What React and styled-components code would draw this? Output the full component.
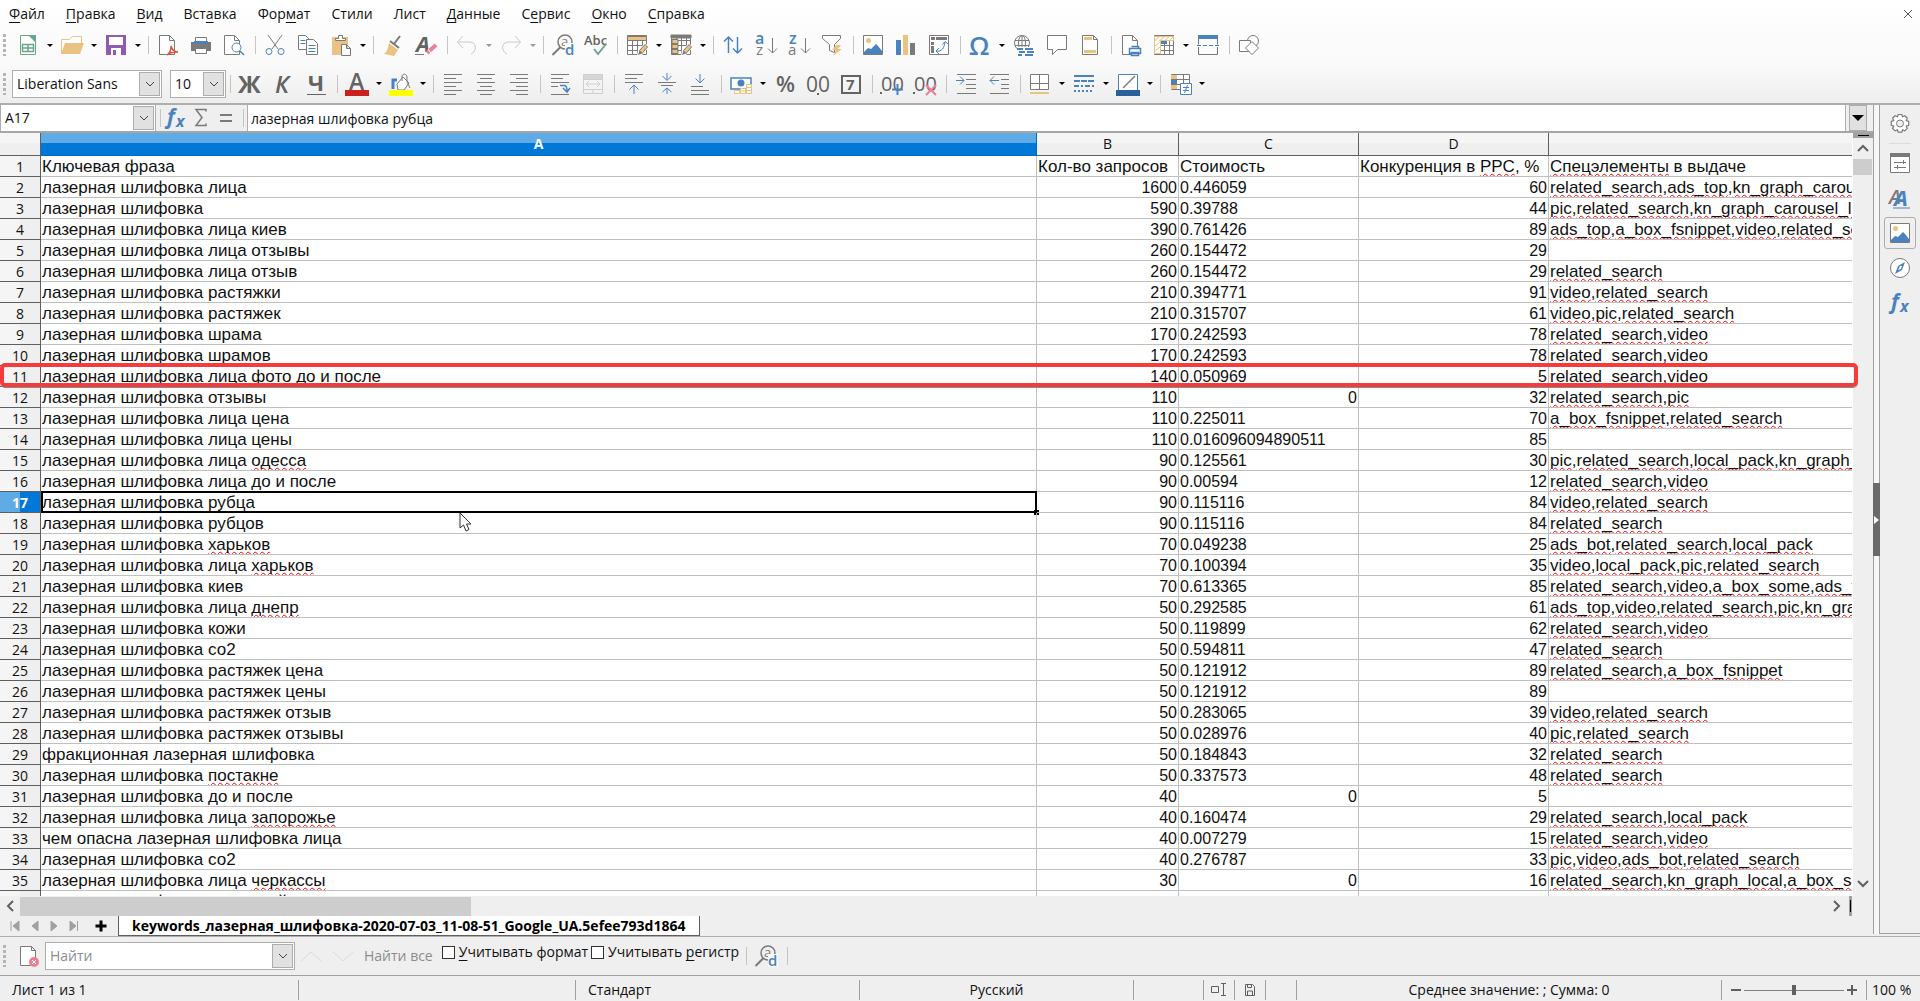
import React from 'react';
import styled, { createGlobalStyle, css } from 'styled-components';

const GRAY = '#7a7a7a';
const BLUE = '#4a82bd';
const TAN = '#eac282';
const UI_FONT = '"Open Sans", "Noto Sans", sans-serif';
const CELL_FONT = '"Liberation Sans", Arial, sans-serif';

const menu = [
  ['', 'Ф', 'айл'],
  ['', 'П', 'равка'],
  ['', 'В', 'ид'],
  ['Вст', 'а', 'вка'],
  ['Фор', 'м', 'ат'],
  ['Стили', '', ''],
  ['Лист', '', ''],
  ['', 'Д', 'анные'],
  ['С', 'е', 'рвис'],
  ['', 'О', 'кно'],
  ['', 'С', 'правка'],
];

// misspelled words are wrapped in tildes
const rows = [
  ['Ключевая фраза', 'Кол-во запросов', 'Стоимость', 'Конкуренция в ~PPC~, %', '~Спецэлементы~ в выдаче'],
  ['лазерная шлифовка лица', 1600, '0.446059', 60, 'related_search,ads_top,kn_graph_carousel_list'],
  ['лазерная шлифовка', 590, '0.39788', 44, 'pic,related_search,kn_graph_carousel_list'],
  ['лазерная шлифовка лица киев', 390, '0.761426', 89, 'ads_top,a_box_fsnippet,video,related_search'],
  ['лазерная шлифовка лица отзывы', 260, '0.154472', 29, ''],
  ['лазерная шлифовка лица отзыв', 260, '0.154472', 29, 'related_search'],
  ['лазерная шлифовка растяжки', 210, '0.394771', 91, 'video,related_search'],
  ['лазерная шлифовка растяжек', 210, '0.315707', 61, 'video,pic,related_search'],
  ['лазерная шлифовка шрама', 170, '0.242593', 78, 'related_search,video'],
  ['лазерная шлифовка шрамов', 170, '0.242593', 78, 'related_search,video'],
  ['лазерная шлифовка лица фото до и после', 140, '0.050969', 5, 'related_search,video'],
  ['лазерная шлифовка отзывы', 110, 0, 32, 'related_search,pic'],
  ['лазерная шлифовка лица цена', 110, '0.225011', 70, 'a_box_fsnippet,related_search'],
  ['лазерная шлифовка лица цены', 110, '0.016096094890511', 85, ''],
  ['лазерная шлифовка лица ~одесса~', 90, '0.125561', 30, 'pic,related_search,local_pack,kn_graph_local'],
  ['лазерная шлифовка лица до и после', 90, '0.00594', 12, 'related_search,video'],
  ['лазерная шлифовка рубца', 90, '0.115116', 84, 'video,related_search'],
  ['лазерная шлифовка рубцов', 90, '0.115116', 84, 'related_search'],
  ['лазерная шлифовка ~харьков~', 70, '0.049238', 25, 'ads_bot,related_search,local_pack'],
  ['лазерная шлифовка лица ~харьков~', 70, '0.100394', 35, 'video,local_pack,pic,related_search'],
  ['лазерная шлифовка киев', 70, '0.613365', 85, 'related_search,video,a_box_some,ads_top'],
  ['лазерная шлифовка лица ~днепр~', 50, '0.292585', 61, 'ads_top,video,related_search,pic,kn_graph'],
  ['лазерная шлифовка кожи', 50, '0.119899', 62, 'related_search,video'],
  ['лазерная шлифовка со2', 50, '0.594811', 47, 'related_search'],
  ['лазерная шлифовка растяжек цена', 50, '0.121912', 89, 'related_search,a_box_fsnippet'],
  ['лазерная шлифовка растяжек цены', 50, '0.121912', 89, ''],
  ['лазерная шлифовка растяжек отзыв', 50, '0.283065', 39, 'video,related_search'],
  ['лазерная шлифовка растяжек отзывы', 50, '0.028976', 40, 'pic,related_search'],
  ['фракционная лазерная шлифовка', 50, '0.184843', 32, 'related_search'],
  ['лазерная шлифовка ~постакне~', 50, '0.337573', 48, 'related_search'],
  ['лазерная шлифовка до и после', 40, 0, 5, ''],
  ['лазерная шлифовка лица ~запорожье~', 40, '0.160474', 29, 'related_search,local_pack'],
  ['чем опасна лазерная шлифовка лица', 40, '0.007279', 15, 'related_search,video'],
  ['лазерная шлифовка со2', 40, '0.276787', 33, 'pic,video,ads_bot,related_search'],
  ['лазерная шлифовка лица ~черкассы~', 30, 0, 16, 'related_search,kn_graph_local,a_box_some'],
  ['лазерная шлифовка лица край', '', '', '', ''],
];

const SELECTED = 17;

/* ---------- icons, drawn on a 24px grid ---------- */

const Svg = ({ size = 24, children }) => (
  <svg width={size} height={size} viewBox="0 0 24 24" fill="none" stroke={GRAY} strokeWidth="1" aria-hidden="true">
    {children}
  </svg>
);

const Glyph = ({ x, y, size, color = GRAY, weight = 400, italic, children }) => (
  <text
    x={x}
    y={y}
    fontSize={size}
    fill={color}
    stroke="none"
    fontWeight={weight}
    fontStyle={italic ? 'italic' : 'normal'}
    fontFamily="Open Sans, Noto Sans, sans-serif"
  >
    {children}
  </text>
);

const page = <path d="M4.500 2.500h11l4 4v15h-15z M15.500 2.500v4h4" fill="#fff" />;
const lines = (list, color = GRAY) => list.map(([x, y, w]) => <path key={`${x}-${y}`} d={`M${x} ${y}.5h${w}`} stroke={color} />);

const FindGlyph = (
  <>
    <circle cx="14" cy="9" r="7" strokeWidth="1.500" />
    <path d="M9.500 14L1.500 22" strokeWidth="2" />
    <Glyph x="10" y="13" size="13">a</Glyph>
    <path d="M14 10h10v13H14z" fill="#fafafa" stroke="none" />
    <Glyph x="14" y="22" size="15" color={BLUE} weight={600}>d</Glyph>
  </>
);

const tableLines = <path d="M2.500 2.500h19v19h-19z M2.500 7.500h19 M2.500 12.500h19 M2.500 17.500h19 M7.500 2.500v19 M12.500 2.500v19 M17.500 2.500v19" fill="#fff" />;
const pencil = (
  <>
    <path d="M12 23l1-6 7-7 4 4-7 8z" fill="#fff" stroke="none" />
    <path d="M14.500 17.500l5.500-6 2.500 2.500-5.500 6.500z" fill={TAN} />
    <path d="M13 22l1.500-4.500 2.500 3z" fill={GRAY} stroke="none" />
  </>
);
const picture = (
  <>
    <path d="M2.500 2.500h19v19h-19z" fill="#fff" />
    <circle cx="7.500" cy="7.500" r="2.500" fill={TAN} stroke="none" />
    <path d="M3 21v-2l4-4 3 1 5-5 2 2 4 5v3z" fill={BLUE} stroke="none" />
  </>
);

const icons = {
  newDoc: (
    <>
      <path d="M4.500 2.500h9l6 6v13h-15z" fill="#fff" stroke="#6aa68c" />
      <path d="M12 2h8v8z" fill="#6aa68c" stroke="none" />
      <path d="M6.500 11.500h11v7h-11z M6.500 15h11 M12 11.500v7" stroke="#6aa68c" strokeWidth="1.500" />
    </>
  ),
  open: (
    <>
      <path d="M1.500 20.500v-14h8l3-3h9v7" stroke={TAN} fill="#fff" />
      <path d="M1 21l4-11h19l-4 11z" fill={TAN} stroke="none" />
    </>
  ),
  save: (
    <>
      <path d="M2 2h20v20H2z" fill="#8e5bb0" stroke="none" />
      <path d="M5 4h14v8H5z M7 15h10v7H7z" fill="#fff" stroke="none" />
      <path d="M9 17h3v5H9z" fill="#8e5bb0" stroke="none" />
    </>
  ),
  pdf: (
    <>
      <path d="M3.500 2.500h10l5 5v14h-15z M13.500 2.500v5h5" fill="#fff" />
      <path d="M11 22c3-2 4-5 4-9 1 4 3 6 7 6-4 0-8 0-11 3z" stroke="#e0533a" strokeWidth="1.500" />
    </>
  ),
  print: (
    <>
      <path d="M2 9h20v9H2z" fill={GRAY} stroke="none" />
      <path d="M6.500 4.500h11v5h-11z" fill="#fff" />
      <path d="M5 8h14v3H5z" fill={BLUE} stroke="none" />
      <path d="M6.500 15.500h11v5h-11z" fill="#fff" />
    </>
  ),
  preview: (
    <>
      <path d="M2.500 2.500h10l5 5v14h-15z M12.500 2.500v5h5" fill="#fff" />
      <circle cx="14.500" cy="14.500" r="4.500" stroke={BLUE} fill="#fff" />
      <path d="M18 18l4 4" stroke={BLUE} strokeWidth="1.500" />
    </>
  ),
  cut: (
    <>
      <path d="M5 2l10 14 M19 2L9 16" />
      <circle cx="6" cy="18.500" r="3" stroke={BLUE} />
      <circle cx="18" cy="18.500" r="3" stroke={BLUE} />
    </>
  ),
  copy: (
    <>
      <path d="M2.500 2.500h7l4 4v10h-11z" fill="#fff" />
      <path d="M4.500 7.500h5M4.500 10.500h5" stroke={BLUE} />
      <path d="M10.500 6.500h7l4 4v11h-11z" fill="#fff" />
      <path d="M12.500 12.500h7M12.500 15.500h7M12.500 18.500h7" stroke={BLUE} />
    </>
  ),
  paste: (
    <>
      <path d="M3 4h16v18H3z" fill={TAN} stroke="none" />
      <path d="M6.500 5.500h3v-3h4v3h3v2h-10z" fill="#fff" />
      <path d="M12.500 11.500h5l4 4v7h-9z M17.500 11.500v4h4" fill="#fff" />
    </>
  ),
  brush: (
    <>
      <path d="M19 3l-6 8" strokeWidth="2" />
      <path d="M9 8l9 7" strokeWidth="2" />
      <path d="M8 10l9 7-4 6-10-2c3-2 4-6 5-11z" fill={TAN} stroke="none" />
    </>
  ),
  clear: (
    <>
      <Glyph x="2" y="19" size="22" weight={700} italic color="#636363">A</Glyph>
      <path d="M1 21.500h9" />
      <path d="M13 20l9-8" stroke="#ea8096" strokeWidth="4" />
      <path d="M14 16l3 4" stroke="#fff" />
    </>
  ),
  undo: <path d="M8 3L2.500 9l5.500 6 M3 9h12c8 1 6 10 1 12" stroke="#c9c9c9" />,
  redo: <path d="M16 3l5.500 6-5.500 6 M21 9H9c-8 1-6 10-1 12" stroke="#c9c9c9" />,
  find: FindGlyph,
  spell: (
    <>
      <Glyph x="0" y="12" size="13" weight={600} color="#636363">Abc</Glyph>
      <path d="M10 16l4 5 8-10" stroke="#6aa68c" strokeWidth="2" />
    </>
  ),
  row: (
    <>
      {tableLines}
      <path d="M2.500 3.500h19v4h-19z" fill={TAN} />
      {pencil}
    </>
  ),
  column: (
    <>
      {tableLines}
      <path d="M2 2h20v3H2z" fill={GRAY} />
      <path d="M3 6.500h6v4H3z M3 11.500h6v4H3z M3 16.500h6v4H3z" fill={TAN} />
      {pencil}
    </>
  ),
  sort: <path d="M7.500 20V4 M3 8.500L7.500 4l4.500 4.500 M16.500 4v16 M12 15.500l4.500 4.500 4.500-4.500" stroke={BLUE} strokeWidth="1.500" />,
  sortAsc: (
    <>
      <Glyph x="1" y="11" size="16" weight={600} color={BLUE}>a</Glyph>
      <Glyph x="2" y="22" size="15">z</Glyph>
      <path d="M18.500 5v15 M14 15.500l4.500 4.500 4.500-4.500" />
    </>
  ),
  sortDesc: (
    <>
      <Glyph x="2" y="11" size="16" weight={600} color={BLUE}>z</Glyph>
      <Glyph x="1" y="22" size="15">a</Glyph>
      <path d="M18.500 5v15 M14 15.500l4.500 4.500 4.500-4.500" />
    </>
  ),
  filter: (
    <>
      <path d="M2.500 2.500h18v3l-6 6v8l-5-2v-6l-7-6z" fill="#fff" />
      <path d="M16 12h5l-3 4h4l-9 7 3-6h-4z" fill={TAN} stroke="none" />
    </>
  ),
  picture,
  chart: (
    <>
      <path d="M2 7h5v15H2z" fill={BLUE} stroke="none" />
      <path d="M9 2h5v20H9z" fill={TAN} stroke="none" />
      <path d="M16 10h5v12h-5z" fill={GRAY} stroke="none" />
    </>
  ),
  pivot: (
    <>
      <path d="M2.500 2.500h19v19h-19z" fill="#fff" />
      <path d="M4 4h4v3H4z M9 4h11v3H9z M4 9h3v3H4z M4 13h3v7H4z" fill={GRAY} stroke="none" />
      <path d="M9 18c6 1 8-3 9-9 M15.500 11.500L18 8.500l3 2.500 M12 15l-3 3 3 3" stroke={BLUE} />
    </>
  ),
  omega: <Glyph x="1" y="22" size="26" weight={600} color={BLUE}>Ω</Glyph>,
  globe: (
    <>
      <circle cx="10" cy="10" r="7.500" />
      <ellipse cx="10" cy="10" rx="3.500" ry="7.500" />
      <path d="M3 7.500h14M3 12.500h14M10 2.500v15" />
      <path d="M5 14h18v9H5z" fill="#fafafa" stroke="none" />
      <path d="M5 16h6M13 16h8M7 19h6M15 19h7M6 22h4M13 22h8" stroke={BLUE} strokeWidth="2" />
    </>
  ),
  comment: <path d="M2.500 2.500h19v14h-9l-5 5v-5h-5z" fill="#fff" />,
  header: (
    <>
      {page}
      <path d="M6 4h8v3H6z M6 17h12v3H6z" fill={TAN} stroke="none" />
    </>
  ),
  printArea: (
    <>
      <path d="M3.500 2.500h10l5 5v14h-15z M13.500 2.500v5h5" fill="#fff" />
      <path d="M10.500 15.500h11v5h-11z M12.500 13.500h7v2 M12.500 19.500h7v3h-7z" stroke={BLUE} fill="#fff" strokeWidth="1.500" />
    </>
  ),
  freeze: (
    <>
      {tableLines}
      <path d="M2.500 3.500h19v4h-13v13h-6z M2 8l5-4M7 8l5-4M12 8l5-4M17 8l4-4M3 13l5-4M3 18l5-4" stroke={TAN} fill="#fff" />
      <path d="M9 8h6v3H9z" fill={BLUE} stroke="none" />
    </>
  ),
  split: (
    <>
      <path d="M2.500 6v5.500M21.500 6v5.500M2.500 14v7.500h19V14" />
      <path d="M2 2h20v4H2z" fill={BLUE} stroke="none" />
      <path d="M1 12.500h22" stroke={BLUE} strokeDasharray="4 2" />
    </>
  ),
  shapes: (
    <>
      <circle cx="16" cy="8" r="5.500" fill="#fff" />
      <path d="M2.500 7.500h11v11h-11z" fill="#fff" />
      <path d="M15 8.500l6.500 6.500-6.500 6.500L8.500 15z" fill="#fff" />
    </>
  ),
  bold: <Glyph x="0" y="21" size="24" weight={700} color="#636363">Ж</Glyph>,
  italic: <Glyph x="4" y="21" size="24" weight={600} italic color="#636363">К</Glyph>,
  underline: (
    <>
      <Glyph x="4" y="19" size="22" weight={700} color="#636363">Ч</Glyph>
      <path d="M3 22.500h19" stroke="#636363" />
    </>
  ),
  fontColor: (
    <>
      <Glyph x="4" y="18" size="23" weight={600} color="#636363">А</Glyph>
      <path d="M0 18h24v6H0z" fill="#c9211e" stroke="none" />
    </>
  ),
  fillColor: (
    <>
      <path d="M4 17V8h4" stroke={BLUE} strokeWidth="3" />
      <path d="M8 12l6-7 6 6-5 7H9z" fill="#fff" />
      <path d="M13 9V4c1-3 5-2 5 1v5l3 6" />
      <path d="M0 18h24v6H0z" fill="#ffff00" stroke="none" />
    </>
  ),
  alignLeft: lines([[3, 2, 18], [3, 6, 12], [3, 10, 18], [3, 14, 12], [3, 18, 18], [3, 22, 12]]),
  alignCenter: lines([[3, 2, 18], [6, 6, 12], [3, 10, 18], [6, 14, 12], [3, 18, 18], [6, 22, 12]]),
  alignRight: lines([[3, 2, 18], [9, 6, 12], [3, 10, 18], [9, 14, 12], [3, 18, 18], [9, 22, 12]]),
  wrap: (
    <>
      {lines([[3, 2, 18], [3, 6, 12], [3, 10, 18], [3, 14, 7], [3, 22, 18]])}
      <path d="M12 13.500h4c2 0 3 2 3 5 M15 16l4 4 3-4" stroke={BLUE} strokeWidth="1.500" />
    </>
  ),
  merge: (
    <>
      <path d="M2.500 2.500h19v19h-19z M2.500 7.500h19 M2.500 17.500h19 M12 3v4 M12 18v4 M5 12h14 M8 9l-3 3 3 3 M16 9l3 3-3 3" stroke="#cfcfcf" />
      <path d="M3 3h18v4H3z" fill="#d6d6d6" stroke="none" />
    </>
  ),
  top: (
    <>
      {lines([[3, 2, 18], [3, 6, 12], [3, 10, 18]])}
      <path d="M12 22v-8 M7.500 17.500L12 13l4.500 4.500" stroke={BLUE} />
    </>
  ),
  middle: (
    <>
      {lines([[3, 10, 18], [6, 13, 12]])}
      <path d="M12 1v7 M7.500 4L12 8.500 16.500 4 M12 22v-6 M7.500 20l4.500-4 4.500 4" stroke={BLUE} />
    </>
  ),
  bottom: (
    <>
      {lines([[3, 14, 12], [3, 18, 18], [3, 22, 18]])}
      <path d="M12 2v8 M7.500 6.500L12 11l4.500-4.500" stroke={BLUE} />
    </>
  ),
  currency: (
    <>
      <path d="M2 6h20v11H2z" fill="#fff" stroke={BLUE} strokeWidth="1.500" />
      <circle cx="12" cy="11" r="3.500" fill={BLUE} stroke="none" />
      <path d="M17.500 12.500h5v9h-5z M17.500 15.500h5 M17.500 18.500h5 M11.500 16.500h5v5h-5z M11.500 19h5 M5.500 18.500h5v3h-5z" stroke={TAN} fill="#fff" />
    </>
  ),
  percent: <Glyph x="3" y="20" size="22" weight={600} color="#636363">%</Glyph>,
  number: (
    <>
      <Glyph x="0" y="20" size="21" color="#636363">00</Glyph>
      <path d="M11 21h2v2h-2z" fill="#636363" stroke="none" />
    </>
  ),
  date: (
    <>
      <path d="M3 4h18v17H3z" stroke="#636363" strokeWidth="2" />
      <Glyph x="7" y="18" size="15" weight={700} color="#636363">7</Glyph>
    </>
  ),
  addDecimal: (
    <>
      <Glyph x="1" y="19" size="20" color="#636363">00</Glyph>
      <path d="M0 20h2v2H0z" fill="#636363" stroke="none" />
      <path d="M17.500 12v11M12 17.500h11" stroke={BLUE} strokeWidth="2" />
    </>
  ),
  delDecimal: (
    <>
      <Glyph x="1" y="19" size="20" color="#636363">00</Glyph>
      <path d="M0 20h2v2H0z" fill="#636363" stroke="none" />
      <path d="M13 13l10 10M23 13L13 23" stroke="#ea8096" strokeWidth="2" />
    </>
  ),
  indent: (
    <>
      {lines([[3, 2, 19], [12, 7, 10], [12, 12, 10], [12, 16, 10], [3, 21, 19]])}
      <path d="M2 8.500h8 M6 4.500l4 4-4 4" stroke={BLUE} />
    </>
  ),
  outdent: (
    <>
      {lines([[3, 2, 19], [14, 7, 8], [14, 12, 8], [14, 16, 8], [3, 21, 19]])}
      <path d="M3 8.500h9 M7 4.500l-4 4 4 4" stroke={BLUE} />
    </>
  ),
  borders: (
    <>
      <path d="M2.500 2.500h18v15h-18z M11.500 2.500v15 M2.500 11.500h18" fill="#fff" />
      <path d="M2 21h19" stroke={TAN} strokeWidth="2" />
    </>
  ),
  borderStyle: (
    <g stroke={BLUE} strokeWidth="2">
      <path d="M2 4h20" />
      <path d="M2 9h20" strokeDasharray="6 1" />
      <path d="M2 14h20" strokeDasharray="5 2 2 2" />
      <path d="M2 19h20" strokeDasharray="2 2" />
    </g>
  ),
  borderColor: (
    <>
      <path d="M2.500 2.500h19v16h-19z" fill="#fff" stroke={BLUE} />
      <path d="M7 16L19 4" strokeWidth="1.500" />
      <path d="M0 18h24v6H0z" fill="#2a6099" stroke="none" />
    </>
  ),
  conditional: (
    <>
      <path d="M3.500 2.500h18v15h-18z M3.500 7.500h18 M3.500 12.500h18 M15.500 2.500v15" fill="#fff" />
      <path d="M3 3h6v4H3z M3 13h6v4H3z" fill={TAN} stroke="none" />
      <path d="M3 8h6v4H3z" fill={BLUE} stroke="none" />
      <path d="M12.500 11.500h11v11h-11z M15 15.500h6 M15 18.500h6 M16.500 21l3-8" fill="#fff" stroke={BLUE} />
    </>
  ),
  fx: (
    <>
      <Glyph x="3" y="18" size="21" weight={700} italic color={BLUE}>f</Glyph>
      <Glyph x="12" y="21" size="16" weight={700} italic color={BLUE}>x</Glyph>
    </>
  ),
  sum: <path d="M17 5.500V3.500H7l6 8-6 8h10v-2" strokeWidth="1.500" />,
  equals: <path d="M6 9h12 M6 15h12" strokeWidth="2" />,
  closeFind: (
    <>
      {page}
      <circle cx="18" cy="18" r="5" fill="#ea8096" stroke="none" />
      <path d="M16 16l4 4 M20 16l-4 4" stroke="#fff" />
    </>
  ),
  gear: (
    <>
      <path
        d="M10.200 2.500h3.600l.7 2.300 2.300-1 2.500 2.400-1 2.400 2.400.8v3.800l-2.400.8 1 2.400-2.500 2.500-2.300-1.100-.7 2.400h-3.600l-.8-2.400-2.300 1.100-2.500-2.500 1.100-2.400-2.400-.8V9.400l2.400-.8-1.100-2.400 2.500-2.400 2.300 1z"
        fill="#fff"
        strokeWidth="1.200"
      />
      <circle cx="12" cy="11.500" r="3.500" fill="#efefef" />
    </>
  ),
  properties: (
    <>
      <path d="M2.500 2.500h19v19h-19z" fill="#fff" />
      <path d="M2 2h20v4H2z" fill={GRAY} stroke="none" />
      <path d="M6 11.500h12 M6 16.500h12 M15.500 9v4 M9.500 14v4" />
    </>
  ),
  styles: (
    <>
      <Glyph x="1" y="18" size="20" weight={600} italic>A</Glyph>
      <Glyph x="6" y="20" size="22" weight={700} italic color={BLUE}>A</Glyph>
      <path d="M5 22h17" stroke={BLUE} />
    </>
  ),
  compass: (
    <>
      <circle cx="12" cy="12" r="9.500" fill="#fff" />
      <path d="M17 6l-3 8-7 4 3-8z M12 10l-2 4 3-1 1-3z" fill={BLUE} fillRule="evenodd" stroke="none" />
    </>
  ),
};

const Caret = styled.span`
  width: 0;
  margin: 0 3px 0 7px;
  border: 3px solid transparent;
  border-top-color: ${(p) => (p.$muted ? '#9a9a9a' : '#000')};
  border-bottom: 0;
`;

const standardBar = [
  'newDoc v', 'open v', 'save v', '|', 'pdf', 'print', 'preview', '|', 'cut', 'copy', 'paste v', '|',
  'brush', 'clear', '|', 'undo m', 'redo m', '|', 'find', 'spell', '|', 'row v', 'column v', '|',
  'sort', 'sortAsc', 'sortDesc', 'filter', '|', 'picture', 'chart', 'pivot', '|',
  'omega v', 'globe', 'comment', 'header', '|', 'printArea', 'freeze v', 'split', '|', 'shapes',
];

const formatBar = [
  '|', 'bold', 'italic', 'underline', '|', 'fontColor v', 'fillColor v', '|', 'alignLeft', 'alignCenter', 'alignRight', '|',
  'wrap', 'merge', '|', 'top', 'middle', 'bottom', '|', 'currency v', 'percent', 'number', 'date', '|',
  'addDecimal', 'delDecimal', '|', 'indent', 'outdent', '|', 'borders v', 'borderStyle v', 'borderColor v', '|', 'conditional v',
];

const Tools = ({ items }) => items.map((item, i) => {
  if (item === '|') return <Separator key={`sep${i}`} />;
  const [name, caret] = item.split(' ');
  return (
    <ToolButton key={name} type="button" aria-label={name} $wide={!!caret}>
      <Svg>{icons[name]}</Svg>
      {caret && <Caret $muted={caret === 'm'} />}
    </ToolButton>
  );
});

const Chevron = ({ d = 'M4 6l4 4 4-4', width = 1, color = '#444' }) => (
  <svg width="16" height="16" viewBox="0 0 16 16" fill="none" stroke={color} strokeWidth={width} aria-hidden="true">
    <path d={d} />
  </svg>
);

const Marked = ({ text }) => text.split('~').map((part, i) => (i % 2 ? <Misspelled key={i}>{part}</Misspelled> : part));

const Tags = ({ text }) => text.split(',').map((tag, i) => (
  <React.Fragment key={tag}>
    {i > 0 && ','}
    <Misspelled>{tag}</Misspelled>
  </React.Fragment>
));

const isFigure = (value) => value !== '' && !Number.isNaN(Number(value));

const Sheet = () => (
  <Table>
    <colgroup>
      <col style={{ width: 41 }} />
      <col style={{ width: 996 }} />
      <col style={{ width: 142 }} />
      <col style={{ width: 180 }} />
      <col style={{ width: 190 }} />
      <col />
    </colgroup>
    <thead>
      <tr>
        <ColumnHead aria-label="Выделить всё" />
        <ColumnHead $selected>A</ColumnHead>
        <ColumnHead>B</ColumnHead>
        <ColumnHead>C</ColumnHead>
        <ColumnHead>D</ColumnHead>
        <ColumnHead aria-label="E" />
      </tr>
    </thead>
    <tbody>
      {rows.map((row, r) => (
        <tr key={r}>
          <RowHead scope="row" $selected={r + 1 === SELECTED}>{r + 1}</RowHead>
          {row.map((value, c) => (
            <Cell
              key={c}
              $right={typeof value === 'number'}
              $figure={isFigure(value)}
              $active={r + 1 === SELECTED && c === 0}
            >
              {r > 0 && c === 4 ? value && <Tags text={value} /> : <Marked text={String(value)} />}
            </Cell>
          ))}
        </tr>
      ))}
    </tbody>
  </Table>
);

export default function App() {
  return (
    <Window>
      <GlobalStyle />
      <Top>
        <MenuBar>
          {menu.map(([before, key, after]) => (
            <MenuItem key={before + key + after} type="button">
              {before}
              <u>{key}</u>
              {after}
            </MenuItem>
          ))}
          <CloseButton type="button" aria-label="Закрыть">
            <Chevron d="M4 4l8 8M12 4l-8 8" color="#555" />
          </CloseButton>
        </MenuBar>
        <Toolbar>
          <Grip />
          <Tools items={standardBar} />
        </Toolbar>
        <Toolbar $short>
          <Grip />
          <Combo $width={150}>
            <select aria-label="Шрифт"><option>Liberation Sans</option></select>
            <ComboArrow><Chevron /></ComboArrow>
          </Combo>
          <Combo $width={56}>
            <select aria-label="Размер"><option>10</option></select>
            <ComboArrow><Chevron /></ComboArrow>
          </Combo>
          <Tools items={formatBar} />
        </Toolbar>
      </Top>

      <Body>
        <Main>
          <FormulaBar>
            <NameBox>
              <input aria-label="Область листа" defaultValue="A17" />
              <ComboArrow as="button" type="button" aria-label="Список областей"><Chevron /></ComboArrow>
            </NameBox>
            <Separator />
            <FormulaButton type="button" aria-label="Мастер функций"><Svg>{icons.fx}</Svg></FormulaButton>
            <FormulaButton type="button" aria-label="Сумма"><Svg>{icons.sum}</Svg></FormulaButton>
            <FormulaButton type="button" aria-label="Формула"><Svg>{icons.equals}</Svg></FormulaButton>
            <Separator />
            <FormulaInput aria-label="Строка ввода" defaultValue="лазерная шлифовка рубца" />
            <ExpandButton type="button" aria-label="Развернуть"><BigCaret /></ExpandButton>
          </FormulaBar>
          <GridArea>
            <SheetView><Sheet /></SheetView>
            <VScroll>
              <SplitKnob />
              <Chevron d="M3 11l5-5 5 5" width={2} color="#606060" />
              <VThumb />
              <Chevron d="M3 5l5 5 5-5" width={2} color="#606060" />
            </VScroll>
            <RowHighlight />
            <Pointer width="14" height="20" viewBox="0 0 14 20" aria-hidden="true">
              <path d="M1 1v15l3.500-3 2.500 6 3-1.500-2.500-5.500H12z" fill="#fff" stroke="#333" />
            </Pointer>
          </GridArea>
          <HScroll>
            <Chevron d="M11 3L6 8l5 5" width={2} color="#606060" />
            <HThumb />
            <Chevron d="M5 3l5 5-5 5" width={2} color="#606060" />
            <TabKnob />
          </HScroll>
          <TabBar>
            {['M5 3v10M13 3v10L7 8z', 'M12 3v10L6 8z', 'M5 3v10l6-5z', 'M4 3v10l6-5zM11.500 3v10'].map((d) => (
              <TabNav key={d} type="button" aria-label="Перейти к листу">
                <svg width="16" height="16" viewBox="0 0 16 16" fill="#a0a0a0" stroke="#a0a0a0" aria-hidden="true"><path d={d} /></svg>
              </TabNav>
            ))}
            <AddSheet type="button" aria-label="Добавить лист"><Chevron d="M8 2.500v11M2.500 8h11" width={3} color="#000" /></AddSheet>
            <SheetTab type="button">keywords_лазерная_шлифовка-2020-07-03_11-08-51_Google_UA.5efee793d1864</SheetTab>
          </TabBar>
        </Main>
        <Splitter><SplitterHandle><i /></SplitterHandle></Splitter>
        <Sidebar>
          <SideButton type="button" aria-label="Настройки"><Svg>{icons.gear}</Svg></SideButton>
          <SideRule />
          {['properties', 'styles', 'picture', 'compass', 'fx'].map((name) => (
            <SideButton key={name} type="button" aria-label={name} $active={name === 'picture'}>
              <Svg>{icons[name]}</Svg>
            </SideButton>
          ))}
        </Sidebar>
      </Body>

      <FindBar>
        <Grip />
        <FindButton type="button" aria-label="Закрыть поиск"><Svg>{icons.closeFind}</Svg></FindButton>
        <FindBox>
          <input aria-label="Найти" placeholder="Найти" />
          <ComboArrow as="button" type="button" aria-label="История поиска"><Chevron /></ComboArrow>
        </FindBox>
        <FindStep type="button" aria-label="Предыдущее"><Svg><path d="M2 17L12 8l10 9" stroke="#dcdcdc" /></Svg></FindStep>
        <FindStep type="button" aria-label="Следующее"><Svg><path d="M2 8l10 9 10-9" stroke="#dcdcdc" /></Svg></FindStep>
        <FindAll type="button" disabled>Найти все</FindAll>
        <Check>
          <input type="checkbox" />
          <span><u>У</u>читывать формат</span>
        </Check>
        <Check>
          <input type="checkbox" />
          <span>Учитывать <u>р</u>егистр</span>
        </Check>
        <Separator />
        <ToolButton type="button" aria-label="Найти и заменить"><Svg>{icons.find}</Svg></ToolButton>
        <Separator />
      </FindBar>

      <StatusBar>
        <Status $grow $width={299}>Лист 1 из 1</Status>
        <Status $grow $width={277} />
        <Status $grow $width={284}>Стандарт</Status>
        <Status $grow $width={274} $center>Русский</Status>
        <Status $width={70} />
        <Status $width={31} $center>
          <svg width="18" height="16" viewBox="0 0 18 16" fill="none" stroke="#606060" aria-hidden="true">
            <path d="M1.500 4.500h7v6h-7z M11 1.500h5 M13.500 1.500v12 M11 13.500h5" />
          </svg>
        </Status>
        <Status $width={31} $center>
          <svg width="16" height="16" viewBox="0 0 16 16" fill="none" stroke="#606060" aria-hidden="true">
            <path d="M3.500 2.500h7l2 2v9h-9z M5.500 2.500v3h4v-3 M5.500 13v-4h5v4" />
          </svg>
        </Status>
        <Status $width={31} />
        <Status $grow $width={425} $center>Среднее значение: ; Сумма: 0</Status>
        <Status $width={145} $center>
          <ZoomStep type="button" aria-label="Уменьшить"><Chevron d="M3 8h10" width={2} color="#606060" /></ZoomStep>
          <ZoomRange type="range" aria-label="Масштаб" defaultValue="50" />
          <ZoomStep type="button" aria-label="Увеличить"><Chevron d="M3 8h10M8 3v10" width={2} color="#606060" /></ZoomStep>
        </Status>
        <Status $width={53} $last>100 %</Status>
      </StatusBar>
    </Window>
  );
}

const GlobalStyle = createGlobalStyle`
  * { box-sizing: border-box; }
  body {
    margin: 0;
    font: 14px/20px ${UI_FONT};
    color: #111;
    background: #efefef;
  }
  button, input, select {
    margin: 0;
    padding: 0;
    border: 0;
    border-radius: 0;
    background: none;
    font: inherit;
    color: inherit;
  }
  svg { display: block; flex: none; overflow: visible; }
  u { text-underline-offset: 3px; }
`;

const Window = styled.div`
  display: flex;
  flex-direction: column;
  height: 100vh;
  overflow: hidden;
`;

const Top = styled.header`
  flex: none;
  background: linear-gradient(#ffffff, #f9f9f9 65%, #eeeeee);
  border-bottom: 2px solid #b0adad;
`;

const MenuBar = styled.nav`
  display: flex;
  align-items: center;
  gap: 21px;
  height: 26px;
  padding: 2px 4px 0 9px;
`;

const MenuItem = styled.button`
  white-space: nowrap;
`;

const CloseButton = styled.button`
  margin-left: auto;
`;

const Toolbar = styled.div`
  display: flex;
  align-items: center;
  height: ${(p) => (p.$short ? 39 : 38)}px;
  padding-left: 3px;
`;

const Grip = styled.span`
  flex: none;
  width: 3px;
  height: 22px;
  margin-right: 6px;
  background: repeating-linear-gradient(#b5b5b5 0 3px, transparent 3px 5px);
`;

const Separator = styled.span`
  flex: none;
  width: 8px;
  height: 18px;
  background: linear-gradient(#c4c4c4, #c4c4c4) 4px 0 / 1px 100% no-repeat;
`;

const ToolButton = styled.button`
  display: flex;
  align-items: center;
  flex: none;
  width: ${(p) => (p.$wide ? 44 : 33)}px;
  padding-left: 4px;
`;

const fieldBox = css`
  display: flex;
  flex: none;
  border: 1px solid #b0adad;
  background: #fff;

  select, input {
    flex: 1;
    min-width: 0;
    padding-left: 4px;
    appearance: none;
    outline: 0;
  }
`;

const Combo = styled.div`
  ${fieldBox}
  width: ${(p) => p.$width}px;
  height: 28px;

  & + & { margin-left: 8px; }
`;

const ComboArrow = styled.span`
  display: flex;
  align-items: center;
  justify-content: center;
  flex: none;
  width: 21px;
  margin: 1px;
  border: 1px solid #adadad;
  background: #e1e1e1;
  pointer-events: none;
`;

const Body = styled.div`
  display: flex;
  flex: 1;
  min-height: 0;
`;

const Main = styled.main`
  display: flex;
  flex-direction: column;
  flex: 1;
  min-width: 0;
`;

const FormulaBar = styled.div`
  display: flex;
  align-items: center;
  flex: none;
  height: 28px;
  border-bottom: 2px solid #a6a6a6;
  padding-right: 6px;
`;

const NameBox = styled.div`
  ${fieldBox}
  align-self: stretch;
  width: 156px;
  border-width: 0 1px;
`;

const FormulaButton = styled.button`
  width: 25px;
`;

const FormulaInput = styled.input`
  flex: 1;
  align-self: stretch;
  min-width: 0;
  padding: 1px 3px 0;
  border: solid #b0adad;
  border-width: 0 1px;
  background: #fff;
  outline: 0;
`;

const ExpandButton = styled.button`
  display: flex;
  align-items: center;
  justify-content: center;
  width: 18px;
  height: 26px;
  margin-left: 3px;
  border: 1px solid #adadad;
  background: #e1e1e1;
`;

const BigCaret = styled.span`
  border: 6px solid transparent;
  border-top-color: #000;
  border-bottom: 0;
`;

const GridArea = styled.div`
  position: relative;
  display: flex;
  flex: 1;
  min-height: 0;
`;

const SheetView = styled.div`
  flex: 1;
  min-width: 0;
  overflow: hidden;
  background: #fff;
`;

const Table = styled.table`
  table-layout: fixed;
  width: 100%;
  min-width: 1852px;
  border-spacing: 0;
`;

const ColumnHead = styled.th`
  height: 23px;
  padding: 0;
  border-right: 1px solid #5f5f5f;
  border-bottom: 1px solid #5f5f5f;
  background: linear-gradient(#f5f5f5 10px, #efefef 10px);
  font-weight: 400;
  line-height: 20px;

  &:last-child { border-right: 0; }

  ${(p) => p.$selected && css`
    border-color: #0069c2;
    background: linear-gradient(#5fabe6 10px, #0078d7 10px);
    color: #fff;
    font-weight: 700;
  `}
`;

const RowHead = styled.th`
  padding: 2px 0 0;
  border-right: 1px solid #5f5f5f;
  border-bottom: 1px solid #5f5f5f;
  background: linear-gradient(90deg, #f5f5f5 20px, #efefef 20px);
  font-weight: 400;
  line-height: 18px;

  ${(p) => p.$selected && css`
    background: linear-gradient(90deg, #5fabe6 20px, #0078d7 20px);
    color: #fff;
    font-weight: 700;
  `}
`;

const Cell = styled.td`
  position: relative;
  height: 21px;
  padding: 2px 1px 0;
  border-right: 1px solid #c0c0c0;
  border-bottom: 1px solid #c0c0c0;
  overflow: hidden;
  font-family: ${CELL_FONT};
  font-size: ${(p) => (p.$figure ? 16 : 17)}px;
  line-height: 18px;
  text-align: ${(p) => (p.$right ? 'right' : 'left')};
  white-space: nowrap;

  &:last-child { border-right: 0; }

  ${(p) => p.$active && css`
    overflow: visible;

    &::before {
      content: '';
      position: absolute;
      inset: -1px -1px -1px 0;
      border: 2px solid #000;
    }
    &::after {
      content: '';
      position: absolute;
      right: -3px;
      bottom: -3px;
      width: 5px;
      height: 5px;
      background: #000;
    }
  `}
`;

const Misspelled = styled.span`
  text-decoration: underline wavy #f00 1px;
  text-decoration-skip-ink: none;
  text-underline-offset: 1px;
`;

const VScroll = styled.div`
  display: flex;
  flex-direction: column;
  align-items: center;
  flex: none;
  width: 21px;
  padding-bottom: 4px;
  border-left: 1px solid #fff;

  & > svg:last-child { margin-top: auto; }
`;

const SplitKnob = styled.div`
  align-self: stretch;
  flex: none;
  height: 5px;
  margin-bottom: 2px;
  background: linear-gradient(#000, #000) center 2px / 11px 1px no-repeat #a0a0a0;
`;

const VThumb = styled.div`
  align-self: stretch;
  height: 16px;
  margin: 3px 1px 0 0;
  background: #cdcdcd;
`;

const RowHighlight = styled.div`
  position: absolute;
  top: 230px;
  left: 0;
  right: 15px;
  height: 24px;
  border: 4px solid #f53b3b;
  border-radius: 5px;
  box-shadow: 0 1px 0 #8a8a8a;
  pointer-events: none;
`;

const Pointer = styled.svg`
  position: absolute;
  top: 379px;
  left: 459px;
`;

const HScroll = styled.div`
  display: flex;
  align-items: center;
  flex: none;
  height: 20px;
  padding: 0 21px 0 2px;

  & > svg:nth-of-type(2) { margin-left: auto; }
`;

const HThumb = styled.div`
  width: 451px;
  height: 19px;
  margin-left: 2px;
  background: #cdcdcd;
`;

const TabKnob = styled.div`
  width: 3px;
  height: 20px;
  margin-left: 4px;
  background: linear-gradient(#000, #000) center / 1px 12px no-repeat #a0a0a0;
`;

const TabBar = styled.div`
  display: flex;
  align-items: center;
  flex: none;
  height: 20px;
  padding-left: 6px;
`;

const TabNav = styled.button`
  width: 20px;
`;

const AddSheet = styled.button`
  margin: 0 9px 0 7px;
`;

const SheetTab = styled.button`
  align-self: stretch;
  padding: 0 13px;
  border: solid #5f5f5f;
  border-width: 0 1px 1px;
  background: #fff;
  color: #000;
  font-weight: 700;
  line-height: 19px;
  white-space: nowrap;
`;

const Splitter = styled.div`
  display: flex;
  align-items: center;
  flex: none;
  width: 7px;
  margin-bottom: 2px;
  border: solid #a0a0a0;
  border-width: 0 1px;
  background: #f7f7f7;
`;

const SplitterHandle = styled.div`
  display: flex;
  align-items: center;
  flex: none;
  width: 7px;
  height: 73px;
  margin: 0 -1px;
  background: #696969;

  i {
    margin-left: 1px;
    border: 4px solid transparent;
    border-left: 5px solid #fff;
    border-right: 0;
  }
`;

const Sidebar = styled.aside`
  display: flex;
  flex-direction: column;
  align-items: center;
  flex: none;
  width: 40px;
  margin-bottom: 2px;
  padding-top: 3px;
  border-bottom: 1px solid #a0a0a0;
`;

const SideButton = styled.button`
  display: flex;
  align-items: center;
  justify-content: center;
  width: 32px;
  height: 32px;
  margin-bottom: 3px;
  border: 1px solid ${(p) => (p.$active ? '#adadad' : 'transparent')};
  border-radius: 3px;
`;

const SideRule = styled.div`
  width: 22px;
  height: 1px;
  margin-bottom: 3px;
  background: #dcdcdc;
`;

const FindBar = styled.div`
  display: flex;
  align-items: center;
  flex: none;
  height: 39px;
  padding-left: 3px;
  border-top: 1px solid #b0adad;
`;

const FindButton = styled.button`
  width: 33px;
  padding-left: 4px;
`;

const FindBox = styled.div`
  ${fieldBox}
  width: 250px;
  height: 28px;

  input::placeholder { color: #8c8c8c; }
`;

const FindStep = styled.button`
  width: 32px;
  padding-left: 4px;
`;

const FindAll = styled.button`
  margin: 0 9px 0 5px;
  color: #8c8c8c;
`;

const Check = styled.label`
  display: flex;
  align-items: center;
  gap: 4px;
  margin-right: 3px;
  padding-bottom: 8px;

  input {
    appearance: none;
    width: 13px;
    height: 13px;
    border: 1px solid #333;
    background: #fff;
  }
`;

const StatusBar = styled.footer`
  display: flex;
  align-items: center;
  flex: none;
  height: 26px;
  padding-top: 2px;
  border-top: 1px solid #a0a0a0;
`;

const Status = styled.div`
  display: flex;
  align-items: center;
  justify-content: ${(p) => (p.$center ? 'center' : 'flex-start')};
  flex: ${(p) => (p.$grow ? 1 : 0)} ${(p) => (p.$grow ? 1 : 0)} ${(p) => p.$width}px;
  height: 20px;
  padding-left: ${(p) => (p.$center ? 0 : p.$last ? 5 : 12)}px;
  border-right: ${(p) => (p.$last ? 0 : 1)}px solid #a0a0a0;
  white-space: nowrap;
`;

const ZoomStep = styled.button`
  flex: none;
`;

const ZoomRange = styled.input`
  appearance: none;
  width: 100px;
  height: 16px;

  &::-webkit-slider-runnable-track {
    height: 16px;
    background: linear-gradient(#808080, #808080) 0 8px / 100% 1px no-repeat;
  }
  &::-webkit-slider-thumb {
    appearance: none;
    width: 4px;
    height: 10px;
    margin-top: 3px;
    background: #606060;
  }
`;
